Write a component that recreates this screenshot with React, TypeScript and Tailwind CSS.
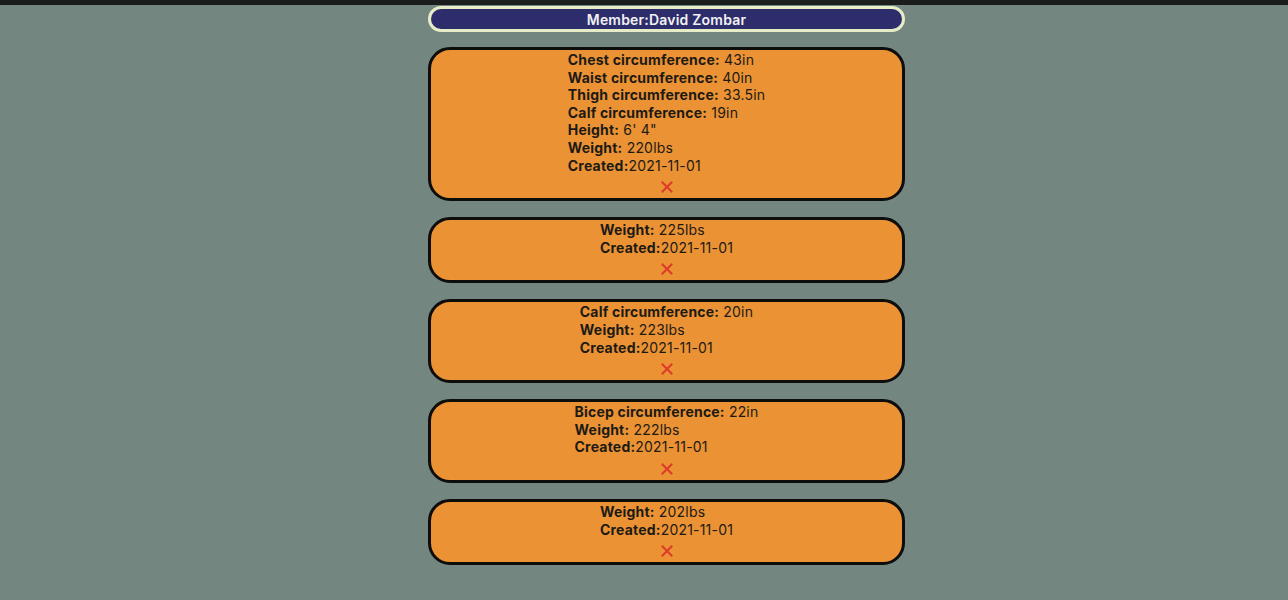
import React from 'react'

type Entry = { label: string; value: string }

const records: Entry[][] = [
  [
    { label: 'Chest circumference:', value: ' 43in' },
    { label: 'Waist circumference:', value: ' 40in' },
    { label: 'Thigh circumference:', value: ' 33.5in' },
    { label: 'Calf circumference:', value: ' 19in' },
    { label: 'Height:', value: ' 6\' 4"' },
    { label: 'Weight:', value: ' 220lbs' },
    { label: 'Created:', value: '2021-11-01' },
  ],
  [
    { label: 'Weight:', value: ' 225lbs' },
    { label: 'Created:', value: '2021-11-01' },
  ],
  [
    { label: 'Calf circumference:', value: ' 20in' },
    { label: 'Weight:', value: ' 223lbs' },
    { label: 'Created:', value: '2021-11-01' },
  ],
  [
    { label: 'Bicep circumference:', value: ' 22in' },
    { label: 'Weight:', value: ' 222lbs' },
    { label: 'Created:', value: '2021-11-01' },
  ],
  [
    { label: 'Weight:', value: ' 202lbs' },
    { label: 'Created:', value: '2021-11-01' },
  ],
]

function Card({ entries }: { entries: Entry[] }) {
  return (
    <div className="w-full rounded-[22px] border-[3px] border-[#0d0d0b] bg-[#ea9234] pt-[1px] pb-[2px] flex flex-col items-center">
      <div className="text-[14px] leading-[17.6px] tracking-[0.2px] text-[#1d1a14]">
        {entries.map((e, i) => (
          <div key={i} className="whitespace-pre">
            <span className="font-bold">{e.label}</span>
            <span>{e.value}</span>
          </div>
        ))}
      </div>
      <button className="mt-[4px] h-[18px] flex items-center justify-center">
        <svg width="12" height="12" viewBox="0 0 12 12">
          <path d="M1.5 1.5 L10.5 10.5 M10.5 1.5 L1.5 10.5" stroke="#e03a2a" strokeWidth="2" strokeLinecap="square" />
        </svg>
      </button>
    </div>
  )
}

export default function App() {
  return (
    <div className="min-h-[600px] bg-[#738680]" style={{ fontFamily: 'Inter, "Liberation Sans", Arial, sans-serif' }}>
      <div className="h-[5px] bg-[#1a1d1b]" />
      <div className="flex justify-center pl-[45px] pt-[1px] pb-[30px]">
        <div className="w-[477px] flex flex-col gap-[17px]">
          <div className="h-[26px] rounded-full border-[3px] border-[#e6edc6] bg-[#2e2d6c] flex items-center justify-center">
            <span className="text-[#f2f2f2] font-semibold text-[14px] tracking-[0.2px]">Member:David Zombar</span>
          </div>
          <div className="flex flex-col gap-[16px] -mt-[2px]">
            {records.map((r, i) => (
              <Card key={i} entries={r} />
            ))}
          </div>
        </div>
      </div>
    </div>
  )
}
